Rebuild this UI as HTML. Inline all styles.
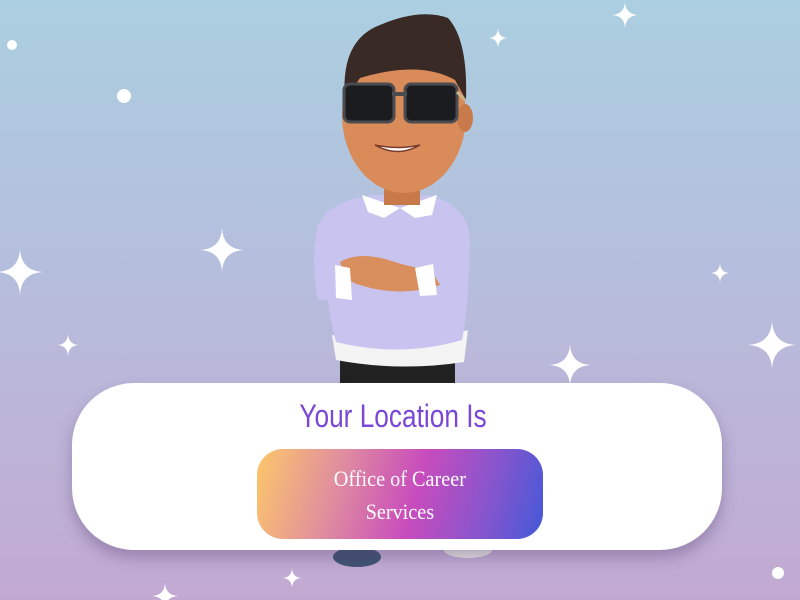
<!DOCTYPE html>
<html><head><meta charset="utf-8"><style>
html,body{margin:0;padding:0;}
body{width:800px;height:600px;overflow:hidden;position:relative;background:linear-gradient(180deg,#abcfe0 0%,#b6bedd 45%,#c2a9d2 100%);font-family:"Liberation Sans",sans-serif;}
svg{position:absolute;left:0;top:0;}
.card{position:absolute;left:72px;top:383px;width:650px;height:167px;background:#fff;border-radius:62px;box-shadow:0 8px 14px rgba(80,60,110,.35);}
.title{position:absolute;left:-4px;width:100%;top:15px;text-align:center;color:#7a47d6;font-size:32px;transform:scaleX(.82);}
.btn{position:absolute;left:185px;top:66px;width:286px;height:90px;border-radius:26px;background:linear-gradient(105deg,#fdc76a 0%,#e08e9e 28%,#c84cbd 55%,#8a55cc 78%,#4459d8 100%);color:#fff;font-family:"Liberation Serif",serif;font-size:22px;text-align:center;line-height:33px;padding-top:13px;box-sizing:border-box;}
.btn span{display:inline-block;transform:scaleX(.92);}
</style></head><body>
<svg width="800" height="600" viewBox="0 0 800 600">
<defs>
<g id="sp"><path d="M0,-22 Q1,-1 22,0 Q1,1 0,22 Q-1,1 -22,0 Q-1,-1 0,-22Z" fill="#fff"/></g>
</defs>
<circle cx="12" cy="45" r="5" fill="#fff"/>
<circle cx="124" cy="96" r="7" fill="#fff"/>
<circle cx="778" cy="573" r="6" fill="#fff"/>
<use href="#sp" transform="translate(625,15) scale(.6)"/>
<use href="#sp" transform="translate(498,38) scale(.45)"/>
<use href="#sp" transform="translate(222,250) scale(1)"/>
<use href="#sp" transform="translate(20,272) scale(1.05)"/>
<use href="#sp" transform="translate(68,345) scale(.5)"/>
<use href="#sp" transform="translate(720,273) scale(.45)"/>
<use href="#sp" transform="translate(772,345) scale(1.1)"/>
<use href="#sp" transform="translate(570,365) scale(.95)"/>
<use href="#sp" transform="translate(292,578) scale(.45)"/>
<use href="#sp" transform="translate(165,596) scale(.6)"/>
<ellipse cx="357" cy="557" rx="24" ry="10" fill="#3f5272"/>
<ellipse cx="468" cy="550" rx="24" ry="8" fill="#e8e6e6"/>
<rect x="340" y="350" width="115" height="40" fill="#222"/>
<path d="M332,335 Q400,350 468,330 L464,362 Q400,372 336,360Z" fill="#f4f4f4"/>
<path d="M318,225 Q330,200 375,195 L428,195 Q468,205 470,240 L468,290 Q466,320 462,340 Q400,358 336,342 Q330,320 328,300 L318,300 Q310,260 318,225Z" fill="#c9c3f0"/>
<path d="M362,195 L400,208 L437,195 L432,215 L415,218 L400,208 L384,218 L368,212Z" fill="#fff"/>
<path d="M340,262 Q360,250 395,262 Q420,270 430,268 L440,285 Q400,298 360,285 Q345,282 340,262Z" fill="#d98e5e"/>
<path d="M335,265 L350,268 L352,300 L336,298Z" fill="#fff"/>
<path d="M415,268 L433,264 L437,295 L420,296Z" fill="#fff"/>
<rect x="384" y="175" width="36" height="30" fill="#c97a4b"/>
<ellipse cx="404" cy="115" rx="62" ry="78" fill="#d98b5a"/>
<ellipse cx="465" cy="118" rx="8" ry="14" fill="#c97a4b"/>
<path d="M345,100 Q340,40 380,25 Q420,8 448,18 Q468,40 466,100 L455,80 Q420,60 360,78Z" fill="#3a2a26"/>
<rect x="344" y="84" width="50" height="38" rx="6" fill="#1a1c20" stroke="#4a4c50" stroke-width="3"/>
<rect x="405" y="84" width="52" height="38" rx="6" fill="#1a1c20" stroke="#4a4c50" stroke-width="3"/>
<rect x="392" y="92" width="15" height="4" fill="#4a4c50"/>
<path d="M457,92 L465,100" stroke="#c9b48a" stroke-width="3"/>
<path d="M375,145 Q398,158 420,145 Q398,150 375,145Z" fill="#fff" stroke="#7a3a2a" stroke-width="1.5"/>
</svg>
<div class="card">
<div class="title">Your Location Is</div>
<div class="btn"><span>Office of Career<br>Services</span></div>
</div>
</body></html>
